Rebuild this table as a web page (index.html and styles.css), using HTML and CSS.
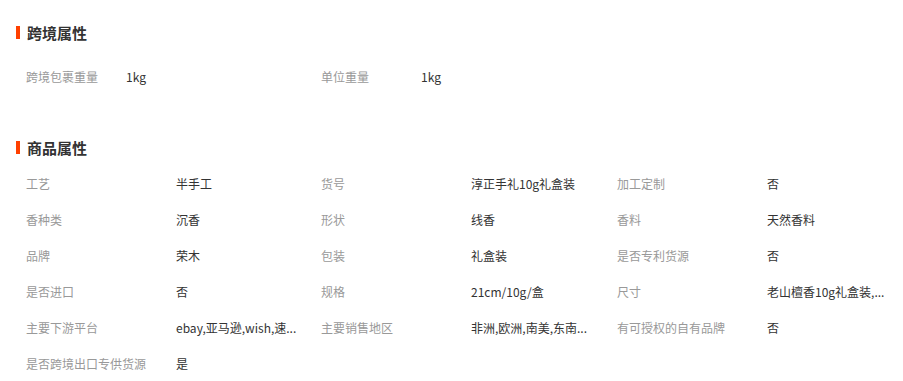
FILE: index.html
```html
<!DOCTYPE html>
<html lang="zh-CN">
<head>
<meta charset="utf-8">
<title>属性</title>
<link rel="stylesheet" href="styles.css">
</head>
<body>
<div class="page">
  <section class="block">
    <h2 class="title"><span class="bar"></span>跨境属性</h2>
    <div class="cross">
      <div class="item"><span class="label short">跨境包裹重量</span><span class="value wide">1kg</span></div>
      <div class="item"><span class="label short">单位重量</span><span class="value wide">1kg</span></div>
    </div>
  </section>
  <section class="block second">
    <h2 class="title"><span class="bar"></span>商品属性</h2>
    <div class="grid">
      <div class="item"><span class="label">工艺</span><span class="value">半手工</span></div>
      <div class="item"><span class="label">货号</span><span class="value">淳正手礼10g礼盒装</span></div>
      <div class="item"><span class="label">加工定制</span><span class="value">否</span></div>
      <div class="item"><span class="label">香种类</span><span class="value">沉香</span></div>
      <div class="item"><span class="label">形状</span><span class="value">线香</span></div>
      <div class="item"><span class="label">香料</span><span class="value">天然香料</span></div>
      <div class="item"><span class="label">品牌</span><span class="value">荣木</span></div>
      <div class="item"><span class="label">包装</span><span class="value">礼盒装</span></div>
      <div class="item"><span class="label">是否专利货源</span><span class="value">否</span></div>
      <div class="item"><span class="label">是否进口</span><span class="value">否</span></div>
      <div class="item"><span class="label">规格</span><span class="value">21cm/10g/盒</span></div>
      <div class="item"><span class="label">尺寸</span><span class="value">老山檀香10g礼盒装,...</span></div>
      <div class="item"><span class="label">主要下游平台</span><span class="value">ebay,亚马逊,wish,速...</span></div>
      <div class="item"><span class="label">主要销售地区</span><span class="value">非洲,欧洲,南美,东南...</span></div>
      <div class="item"><span class="label">有可授权的自有品牌</span><span class="value">否</span></div>
      <div class="item"><span class="label">是否跨境出口专供货源</span><span class="value">是</span></div>
    </div>
  </section>
</div>
</body>
</html>
```
FILE: styles.css
```css
* { box-sizing: border-box; }
body {
  margin: 0;
  background: #fff;
  font-family: "Noto Sans CJK SC", "Noto Sans", sans-serif;
  font-size: 12px;
  color: #333;
}
.page {
  padding: 22px 0 0 16px;
}
.title {
  display: flex;
  align-items: center;
  gap: 7px;
  margin: 0;
  height: 20px;
  font-size: 15px;
  font-weight: bold;
  color: #333;
}
.bar {
  width: 4px;
  height: 13px;
  background: #ff4000;
}
.cross {
  display: flex;
  margin-top: 17px;
  padding-left: 10px;
}
.second {
  margin-top: 42px;
}
.grid {
  display: grid;
  grid-template-columns: 295px 296px 296px;
  margin-top: 9px;
  padding-left: 10px;
}
.item {
  display: flex;
  height: 36px;
  line-height: 36px;
  white-space: nowrap;
}
.label {
  width: 150px;
  flex: none;
  color: #999;
}
.label.short {
  width: 100px;
}
.value {
  color: #333;
}
.value.wide {
  width: 195px;
}
```
